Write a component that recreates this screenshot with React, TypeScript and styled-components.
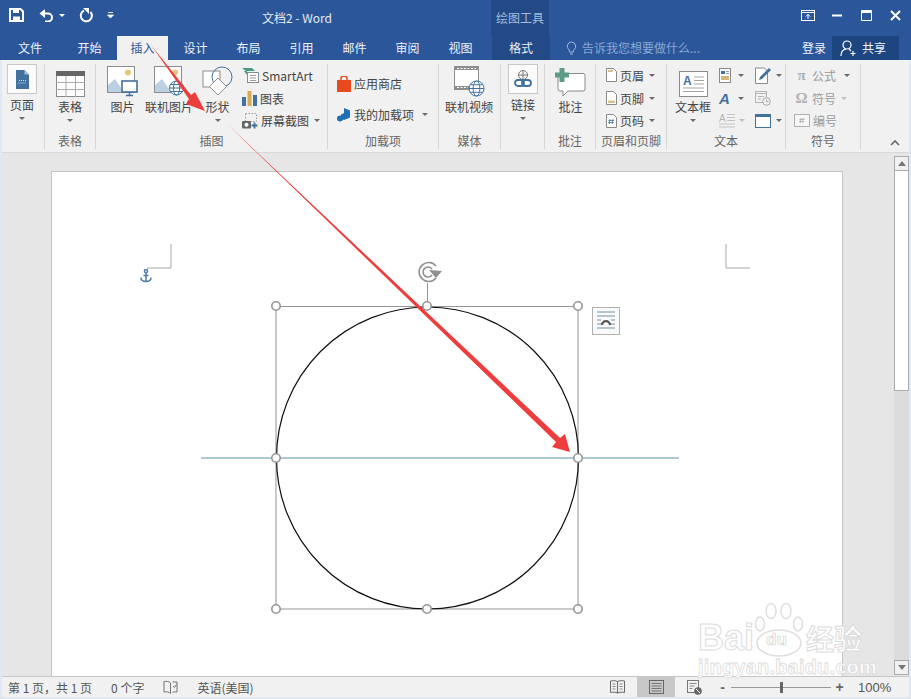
import React from 'react'
import styled, { createGlobalStyle } from 'styled-components'

const GlobalStyle = createGlobalStyle`
  html, body { margin: 0; padding: 0; background: #fff; }
  * { box-sizing: border-box; }
`

const BLUE = '#2b579a'
const ICON_BLUE = '#41719f'
const GREY = '#6a6a6a'

function SaveIcon() {
  return (
    <svg width="15" height="14" viewBox="0 0 15 14">
      <path d="M1 1h10.5L14 3.5V13H1z" fill="none" stroke="#fff" strokeWidth="2" />
      <path d="M4 1h6v4H4zM4 8.5h7V13H4z" fill="#fff" />
    </svg>
  )
}
function UndoIcon() {
  return (
    <svg width="15" height="13" viewBox="0 0 15 13">
      <path d="M2 4.5h7a4 4 0 0 1 0 8H6" fill="none" stroke="#fff" strokeWidth="2" />
      <path d="M6 0v9L0.5 4.5z" fill="#fff" />
    </svg>
  )
}
function RedoIcon() {
  return (
    <svg width="15" height="15" viewBox="0 0 15 15">
      <path d="M5 2.6A5.6 5.6 0 1 0 11.5 4" fill="none" stroke="#fff" strokeWidth="2" />
      <path d="M4 0l6 0v6z" fill="#fff" transform="translate(0 0)" />
    </svg>
  )
}
function QatMore() {
  return (
    <svg width="7" height="8" viewBox="0 0 7 8">
      <path d="M1 1.5h5M0.5 4l3 3 3-3z" fill="#fff" stroke="#fff" strokeWidth="0.8" />
    </svg>
  )
}
function RibbonDisplayIcon() {
  return (
    <svg width="14" height="11" viewBox="0 0 14 11">
      <rect x="0.5" y="0.5" width="13" height="10" fill="none" stroke="#fff" />
      <path d="M1 2.5h12" stroke="#fff" />
      <path d="M7 9V4.5M4.8 6.6L7 4.4l2.2 2.2" fill="none" stroke="#fff" />
    </svg>
  )
}
function MinIcon() {
  return (
    <svg width="10" height="3" viewBox="0 0 10 3">
      <rect width="10" height="2" y="0.5" fill="#fff" />
    </svg>
  )
}
function MaxIcon() {
  return (
    <svg width="11" height="11" viewBox="0 0 11 11">
      <path d="M0.5 0.5h10v10h-10z" fill="none" stroke="#fff" />
      <rect x="0.5" y="0.5" width="10" height="2.5" fill="#fff" />
    </svg>
  )
}
function CloseIcon() {
  return (
    <svg width="11" height="11" viewBox="0 0 11 11">
      <path d="M1 1l9 9M10 1l-9 9" stroke="#fff" strokeWidth="2" />
    </svg>
  )
}
function BulbIcon() {
  return (
    <svg width="11" height="15" viewBox="0 0 11 15">
      <path d="M5.5 1a4.3 4.3 0 0 1 2.4 7.8L7.4 11H3.6l-.5-2.2A4.3 4.3 0 0 1 5.5 1z" fill="none" stroke="#9db8dc" />
      <path d="M4 13h3" stroke="#9db8dc" />
    </svg>
  )
}
function ShareIcon() {
  return (
    <svg width="17" height="17" viewBox="0 0 17 17">
      <circle cx="7" cy="5" r="4" fill="none" stroke="#fff" strokeWidth="1.2" />
      <path d="M1 16c0-4 2-6.500 5-7M9 9l2 2" fill="none" stroke="#fff" strokeWidth="1.2" />
      <path d="M13 11v5M10.500 13.500h5" stroke="#fff" strokeWidth="1.2" />
    </svg>
  )
}
function PageIcon() {
  return (
    <svg width="13" height="19" viewBox="0 0 13 19">
      <path d="M0 0h8.500L13 4.500V19H0z" fill={ICON_BLUE} />
      <path d="M8.500 0v4.500H13z" fill="#a9c0da" />
      <path d="M3 10.500h7M2.500 13h8" stroke="#dfe8f2" strokeDasharray="1 1" />
    </svg>
  )
}
function TableIcon() {
  return (
    <svg width="29" height="26" viewBox="0 0 29 26">
      <rect x="0.5" y="0.5" width="28" height="25" fill="#fff" stroke="#8a8a8a" />
      <rect width="29" height="5" fill="#666" />
      <path d="M0 11.500h29M0 18.500h29M10 5v21M19.500 5v21" stroke="#aaa" />
    </svg>
  )
}
function PictureIcon() {
  return (
    <svg width="31" height="31" viewBox="0 0 31 31">
      <rect x="0.500" y="0.500" width="27" height="26" fill="#fff" stroke="#8d8d8d" />
      <circle cx="21" cy="6.500" r="3" fill="#e4c97a" />
      <path d="M1 26V19l7-6 9 13z" fill="#bcd0e3" />
      <rect x="15" y="15" width="15" height="11" fill="#fff" stroke="#41719f" strokeWidth="1.600" />
      <path d="M22.500 26v3M19 29.500h7" stroke="#41719f" strokeWidth="1.400" />
    </svg>
  )
}
function OnlinePictureIcon() {
  return (
    <svg width="31" height="31" viewBox="0 0 31 31">
      <rect x="0.500" y="0.500" width="27" height="26" fill="#fff" stroke="#8d8d8d" />
      <circle cx="21" cy="6.500" r="3" fill="#e4c97a" />
      <path d="M1 26V19l7-6 9 13z" fill="#bcd0e3" />
      <Globe cx={22.500} cy={22} r={7} />
    </svg>
  )
}
function Globe({ cx, cy, r }: { cx: number; cy: number; r: number }) {
  return (
    <g fill="#fff" stroke="#41719f" strokeWidth="1">
      <circle cx={cx} cy={cy} r={r} />
      <ellipse cx={cx} cy={cy} rx={r * 0.45} ry={r} fill="none" />
      <path d={`M${cx - r} ${cy}h${2 * r}M${cx - r * 0.85} ${cy - r * 0.5}h${1.7 * r}M${cx - r * 0.85} ${cy + r * 0.5}h${1.7 * r}`} fill="none" />
    </g>
  )
}
function ShapesIcon() {
  return (
    <svg width="31" height="31" viewBox="0 0 31 31">
      <rect x="1" y="5" width="17" height="16" fill="#fff" stroke="#8d8d8d" />
      <circle cx="20" cy="11" r="10" fill="none" stroke="#41719f" />
      <path d="M16 12l8.500 8.500-8.500 8.500-8.500-8.500z" fill="#fff" stroke="#8d8d8d" />
    </svg>
  )
}
function SmartArtIcon() {
  return (
    <svg width="17" height="16" viewBox="0 0 17 16">
      <path d="M0 1h10l3 3H4z" fill="#4a9a86" />
      <path d="M2 4l3 4V4z" fill="#4a9a86" />
      <rect x="5.500" y="5.500" width="11" height="10" fill="#fff" stroke="#8d8d8d" />
      <path d="M8 8.500h6M8 11h6M8 13.500h6" stroke="#9a9a9a" />
    </svg>
  )
}
function ChartIcon() {
  return (
    <svg width="15" height="15" viewBox="0 0 15 15">
      <rect x="0" y="6" width="4" height="9" fill="#41719f" />
      <rect x="5.500" y="0" width="4" height="15" fill="#d9a94f" />
      <rect x="11" y="4" width="4" height="11" fill="#41719f" />
    </svg>
  )
}
function ScreenshotIcon() {
  return (
    <svg width="16" height="16" viewBox="0 0 16 16">
      <rect x="3.500" y="0.500" width="11" height="8" fill="none" stroke="#999" strokeDasharray="1.500 1.500" />
      <rect x="0" y="8" width="9" height="7.500" rx="1" fill="#666" />
      <circle cx="4.500" cy="11.700" r="2" fill="#fff" />
      <path d="M12.500 9.500v6M9.500 12.500h6" stroke="#41719f" strokeWidth="1.800" />
    </svg>
  )
}
function StoreIcon() {
  return (
    <svg width="14" height="16" viewBox="0 0 14 16">
      <path d="M0 4h14v12H0z" fill="#e8491d" />
      <path d="M4 5V2.500a3 2.500 0 0 1 6 0V5" fill="none" stroke="#e8491d" strokeWidth="1.500" />
    </svg>
  )
}
function AddinIcon() {
  return (
    <svg width="14" height="14" viewBox="0 0 14 14">
      <path d="M7 0l6 2.500v7L7 12 4 10.800V6.500L7 5z" fill="#1f6fb5" />
      <circle cx="3" cy="10.500" r="3" fill="#1f6fb5" />
    </svg>
  )
}
function VideoIcon() {
  return (
    <svg width="31" height="31" viewBox="0 0 31 31">
      <rect x="0.500" y="0.500" width="24" height="23" fill="#fff" stroke="#8d8d8d" />
      <path d="M1 1h23v3H1zM1 20h23v3H1z" fill="#8d8d8d" />
      <path d="M3 2.500h19M3 21.500h11" stroke="#fff" strokeDasharray="2 1.500" />
      <Globe cx={22.500} cy={22.500} r={7.500} />
    </svg>
  )
}
function LinkIcon() {
  return (
    <svg width="18" height="18" viewBox="0 0 18 18">
      <circle cx="9" cy="5" r="4.500" fill="none" stroke="#777" />
      <path d="M4.500 5h9M9 .5v9" stroke="#777" />
      <rect x="1" y="10" width="9" height="6" rx="3" fill="none" stroke="#41719f" strokeWidth="1.800" />
      <rect x="8" y="10" width="9" height="6" rx="3" fill="none" stroke="#41719f" strokeWidth="1.800" />
    </svg>
  )
}
function CommentIcon() {
  return (
    <svg width="31" height="29" viewBox="0 0 31 29">
      <path d="M3 5.500h25a2 2 0 0 1 2 2V21a2 2 0 0 1-2 2H13l-5 5v-5H5a2 2 0 0 1-2-2z" fill="#fff" stroke="#8a8a8a" />
      <path d="M4.500 0h5v4.500H14v5H9.500V14h-5V9.500H0v-5h4.500z" fill="#5d9d88" />
    </svg>
  )
}
function HeaderIcon({ kind }: { kind: 'head' | 'foot' | 'num' }) {
  return (
    <svg width="11" height="14" viewBox="0 0 11 14">
      <path d="M0.500 0.500h7l3 3v10h-10z" fill="#fff" stroke="#8a8a8a" />
      {kind === 'head' && <rect x="2" y="2" width="5" height="2" fill="#d8c48e" />}
      {kind === 'foot' && <rect x="2" y="9.500" width="7" height="2.500" fill="#d8c48e" />}
      {kind === 'num' && <path d="M4 5l-.8 5M7 5l-.8 5M2.500 6.500h5.500M2.200 8.500h5.500" stroke="#41719f" strokeWidth="0.800" />}
    </svg>
  )
}
function TextBoxIcon() {
  return (
    <svg width="29" height="26" viewBox="0 0 29 26">
      <rect x="0.500" y="0.500" width="28" height="25" fill="#fff" stroke="#8a8a8a" />
      <text x="4" y="14" fontSize="12" fontWeight="700" fill={ICON_BLUE} fontFamily="'Liberation Sans', sans-serif">A</text>
      <path d="M15 6h10M15 9.500h10M15 13h10M4 17h21M4 20.500h21" stroke="#a5a5a5" />
    </svg>
  )
}
function QuickPartsIcon() {
  return (
    <svg width="12" height="15" viewBox="0 0 12 15">
      <rect x="0.500" y="0.500" width="11" height="14" fill="#fff" stroke="#8a8a8a" />
      <rect x="2" y="3" width="4" height="3" fill="#41719f" />
      <path d="M7 3.500h3M7 5.500h3" stroke="#999" />
      <rect x="2" y="8" width="8" height="4" fill="#d3b67a" />
    </svg>
  )
}
function SignatureIcon() {
  return (
    <svg width="17" height="17" viewBox="0 0 17 17">
      <path d="M0.500 1h9l3 3v12.500h-12z" fill="#fff" stroke="#8a8a8a" />
      <path d="M4 13l1-3 9-9 2 2-9 9z" fill="#41719f" />
    </svg>
  )
}
function DateIcon() {
  return (
    <svg width="16" height="16" viewBox="0 0 16 16">
      <rect x="0.500" y="1.500" width="11" height="11" fill="none" stroke="#b5b5b5" />
      <path d="M1 3.500h10M3 6.500h6M3 9h3" stroke="#b5b5b5" />
      <circle cx="11.500" cy="11.500" r="3.800" fill="#f1f1f1" stroke="#a5a5a5" />
      <path d="M11.500 9.500v2.200h2" fill="none" stroke="#a5a5a5" />
    </svg>
  )
}
function DropCapIcon() {
  return (
    <svg width="17" height="16" viewBox="0 0 17 16">
      <text x="0" y="9" fontSize="10" fill="#b5b5b5" fontFamily="'Liberation Sans', sans-serif">A</text>
      <path d="M8 1.500h8M8 4.500h8M8 7.500h8M0 11h16M0 14h16" stroke="#c4c4c4" />
    </svg>
  )
}
function ObjectIcon() {
  return (
    <svg width="16" height="14" viewBox="0 0 16 14">
      <rect x="0.500" y="0.500" width="15" height="13" fill="#fff" stroke="#41719f" />
      <rect width="16" height="3" fill="#41719f" />
    </svg>
  )
}
function SymbolBoxIcon() {
  return (
    <svg width="16" height="13" viewBox="0 0 16 13">
      <rect x="0.500" y="0.500" width="15" height="12" fill="#f6f6f6" stroke="#b0b0b0" />
      <path d="M7 4l-.8 5M9.500 4l-.8 5M5.500 5.500h5M5 7.500h5" stroke="#aaa" strokeWidth="0.800" />
    </svg>
  )
}
function ProofIcon() {
  return (
    <svg width="15" height="15" viewBox="0 0 15 15">
      <path d="M7.500 3C6 1.500 3.500 1 1 1.500v10.500c2.500-.5 5-.2 6.500 1.500V3z" fill="none" stroke="#777" />
      <path d="M9.500 2H14v10c-1.500-.2-3-.2-4.500.3M10 6l1.500 1.500 2-3" fill="none" stroke="#777" />
    </svg>
  )
}
function ReadIcon() {
  return (
    <svg width="15" height="14" viewBox="0 0 15 14">
      <path d="M7.500 1.500C5.500.5 3 .5 .5 1v11.500c2.500-.5 5-.5 7 .5 2-1 4.500-1 7-.5V1C12 .5 9.500.5 7.500 1.500zM7.500 1.500V13" fill="none" stroke="#666" />
      <path d="M2.500 4h3M2.500 6.500h3M2.500 9h3M9.500 4h3M9.500 6.500h3M9.500 9h3" stroke="#888" />
    </svg>
  )
}
function PrintIcon() {
  return (
    <svg width="15" height="14" viewBox="0 0 15 14">
      <rect x="0.500" y="0.500" width="14" height="13" fill="none" stroke="#666" />
      <path d="M2.500 3.500h10M2.500 6h10M2.500 8.500h10M2.500 11h10" stroke="#777" />
    </svg>
  )
}
function WebIcon() {
  return (
    <svg width="15" height="15" viewBox="0 0 15 15">
      <rect x="0.500" y="0.500" width="11" height="12" fill="none" stroke="#777" />
      <path d="M2.500 3.500h7M2.500 6h5M2.500 8.500h3" stroke="#888" />
      <circle cx="11" cy="11" r="3.800" fill="#666" />
      <path d="M9 9l4 4" stroke="#fff" />
    </svg>
  )
}

function DocumentDrawing() {
  const handles = [
    [275, 305], [426, 305], [577, 305],
    [275, 457], [577, 457],
    [275, 608], [426, 608], [577, 608],
  ]
  return (
    <DrawingSvg width="791" height="505" viewBox="51 171 791 505">
      <path d="M170 243v24h-24M725 243v24h24" fill="none" stroke="#a8a8a8" />
      <g fill="none" stroke="#4f7cab" strokeWidth="1.500">
        <circle cx="145" cy="270" r="1.600" />
        <path d="M145 272v8.500M140 276.500c0 2.500 2 4 5 4s5-1.500 5-4M142.500 274.500h5" />
      </g>
      <path d="M200 457h478" stroke="#5b94a8" />
      <rect x="275" y="305.500" width="302" height="302.500" fill="none" stroke="#949494" />
      <circle cx="426.500" cy="457" r="151" fill="none" stroke="#111" strokeWidth="1.200" />
      <path d="M426.500 305v-23" stroke="#949494" />
      <g fill="none" stroke="#909090" strokeWidth="1.600">
        <path d="M435 277a9.500 9.500 0 1 1 0-12" />
        <path d="M431 274a5 5 0 1 1 0-6" />
        <path d="M428 269l13 1-6 7z" fill="#909090" stroke="none" />
      </g>
      {handles.map(([x, y]) => (
        <circle key={`${x}-${y}`} cx={x} cy={y} r="4.200" fill="#fff" stroke="#959595" strokeWidth="1.600" />
      ))}
      <rect x="591.500" y="306.500" width="27" height="27" fill="#fafafa" stroke="#b0b0b0" />
      <path d="M596 311h18M596 315h18M596 327h18M596 323h5M609 323h5M596 319h4M610 319h4" stroke="#6f93a8" />
      <path d="M600 324a5 5 0 0 1 10 0h-2.200a2.800 2.800 0 0 0-5.600 0z" fill="#555" />
    </DrawingSvg>
  )
}

function PaperArrows() {
  return (
    <ArrowsSvg width="911" height="699" viewBox="0 0 911 699">
      <polygon points="151,45 191,95 195,92 205,111 186,104 189,99" fill="#ee3d3d" />
      <polygon points="226,123 560,438 565,434 570,452 552,447 556,442" fill="#ee3d3d" />
    </ArrowsSvg>
  )
}

function Watermark() {
  return (
    <MarkBox>
      <MarkRow>
        <MarkBig>Bai</MarkBig>
        <svg width="50" height="56" viewBox="0 0 50 56">
          <g fill="#fff" stroke="#dedede" strokeWidth="1.500">
            <ellipse cx="6" cy="22" rx="4.500" ry="7" />
            <ellipse cx="17" cy="9" rx="5" ry="7.500" />
            <ellipse cx="32" cy="9" rx="5" ry="7.500" />
            <ellipse cx="44" cy="22" rx="4.500" ry="7" />
            <ellipse cx="25" cy="41" rx="22" ry="13" />
          </g>
        </svg>
        <MarkDu>du</MarkDu>
        <MarkBig $cjk>经验</MarkBig>
      </MarkRow>
      <MarkUrl>jingyan.baidu.com</MarkUrl>
    </MarkBox>
  )
}

const tabs = ['开始', '插入', '设计', '布局', '引用', '邮件', '审阅', '视图']

export default function App() {
  return (
    <Root>
      <GlobalStyle />
      <TitleBar>
        <Qat>
          <QatSlot $w={15}><SaveIcon /></QatSlot>
          <QatSlot $w={15} $ml={15}><UndoIcon /></QatSlot>
          <WhiteCaret />
          <QatSlot $w={15} $ml={14}><RedoIcon /></QatSlot>
          <QatSlot $w={7} $ml={13}><QatMore /></QatSlot>
        </Qat>
        <DocTitle>文档2 - Word</DocTitle>
        <ContextTitle>绘图工具</ContextTitle>
        <WindowButtons>
          <WinSlot $w={14}><RibbonDisplayIcon /></WinSlot>
          <WinSlot $w={10} $ml={17}><MinIcon /></WinSlot>
          <WinSlot $w={11} $ml={19}><MaxIcon /></WinSlot>
          <WinSlot $w={11} $ml={18}><CloseIcon /></WinSlot>
        </WindowButtons>
      </TitleBar>
      <TabBar>
        <FileTab>文件</FileTab>
        {tabs.map(t => (
          <Tab key={t} $active={t === '插入'}>{t}</Tab>
        ))}
        <ContextTab>格式</ContextTab>
        <Search>
          <BulbIcon />
          <span>告诉我您想要做什么...</span>
        </Search>
        <Login>登录</Login>
        <Share>
          <ShareIcon />
          <span>共享</span>
        </Share>
      </TabBar>

      <Framed>
        <Ribbon>
          <Group $w={43}>
            <GroupBody $pl={5}>
              <Large $w={30}>
                <BoxedIcon><PageIcon /></BoxedIcon>
                <LargeLabel>页面</LargeLabel>
                <Caret />
              </Large>
            </GroupBody>
          </Group>

          <Group $w={51}>
            <GroupBody $pl={10}>
              <Large $w={30}>
                <IconSlot><TableIcon /></IconSlot>
                <LargeLabel>表格</LargeLabel>
                <Caret />
              </Large>
            </GroupBody>
            <GroupLabel>表格</GroupLabel>
          </Group>

          <Group $w={232}>
            <GroupBody $pl={11}>
              <Large $w={31}>
                <IconSlot><PictureIcon /></IconSlot>
                <LargeLabel>图片</LargeLabel>
              </Large>
              <Large $w={48} $ml={7}>
                <IconSlot><OnlinePictureIcon /></IconSlot>
                <LargeLabel>联机图片</LargeLabel>
              </Large>
              <Large $w={31} $ml={9}>
                <IconSlot><ShapesIcon /></IconSlot>
                <LargeLabel>形状</LargeLabel>
                <Caret />
              </Large>
              <SmallCol $ml={9}>
                <SmallRow><SmartArtIcon /><SmallText>SmartArt</SmallText></SmallRow>
                <SmallRow><ChartIcon /><SmallText>图表</SmallText></SmallRow>
                <SmallRow><ScreenshotIcon /><SmallText>屏幕截图</SmallText><InlineCaret /></SmallRow>
              </SmallCol>
            </GroupBody>
            <GroupLabel>插图</GroupLabel>
          </Group>

          <Group $w={111}>
            <GroupBody $pl={9}>
              <SmallCol $top={8} $gap={8}>
                <SmallRow><StoreIcon /><SmallText>应用商店</SmallText></SmallRow>
                <SmallRow><AddinIcon /><SmallText>我的加载项</SmallText><InlineCaret $ml={8} /></SmallRow>
              </SmallCol>
            </GroupBody>
            <GroupLabel>加载项</GroupLabel>
          </Group>

          <Group $w={62}>
            <GroupBody $pl={6}>
              <Large $w={48}>
                <IconSlot><VideoIcon /></IconSlot>
                <LargeLabel>联机视频</LargeLabel>
              </Large>
            </GroupBody>
            <GroupLabel>媒体</GroupLabel>
          </Group>

          <Group $w={44}>
            <GroupBody $pl={7}>
              <Large $w={30}>
                <BoxedIcon><LinkIcon /></BoxedIcon>
                <LargeLabel>链接</LargeLabel>
                <Caret />
              </Large>
            </GroupBody>
          </Group>

          <Group $w={51}>
            <GroupBody $pl={10}>
              <Large $w={31}>
                <IconSlot><CommentIcon /></IconSlot>
                <LargeLabel>批注</LargeLabel>
              </Large>
            </GroupBody>
            <GroupLabel>批注</GroupLabel>
          </Group>

          <Group $w={71}>
            <GroupBody $pl={10}>
              <SmallCol>
                <SmallRow><HeaderIcon kind="head" /><SmallText>页眉</SmallText><InlineCaret /></SmallRow>
                <SmallRow><HeaderIcon kind="foot" /><SmallText>页脚</SmallText><InlineCaret /></SmallRow>
                <SmallRow><HeaderIcon kind="num" /><SmallText>页码</SmallText><InlineCaret /></SmallRow>
              </SmallCol>
            </GroupBody>
            <GroupLabel>页眉和页脚</GroupLabel>
          </Group>

          <Group $w={119}>
            <GroupBody $pl={8}>
              <Large $w={36}>
                <IconSlot><TextBoxIcon /></IconSlot>
                <LargeLabel>文本框</LargeLabel>
                <Caret />
              </Large>
              <SmallCol $ml={8}>
                <SmallRow><QuickPartsIcon /><InlineCaret $ml={7} /></SmallRow>
                <SmallRow><LetterA>A</LetterA><InlineCaret $ml={7} /></SmallRow>
                <SmallRow><DropCapIcon /><InlineCaret $ml={3} $muted /></SmallRow>
              </SmallCol>
              <SmallCol $ml={10}>
                <SmallRow><SignatureIcon /><InlineCaret $ml={4} /></SmallRow>
                <SmallRow><DateIcon /></SmallRow>
                <SmallRow><ObjectIcon /><InlineCaret $ml={5} /></SmallRow>
              </SmallCol>
            </GroupBody>
            <GroupLabel>文本</GroupLabel>
          </Group>

          <Group $w={75}>
            <GroupBody $pl={8}>
              <SmallCol>
                <SmallRow><GreekGlyph>π</GreekGlyph><SmallText $muted>公式</SmallText><InlineCaret $ml={8} /></SmallRow>
                <SmallRow><GreekGlyph>Ω</GreekGlyph><SmallText $muted>符号</SmallText><InlineCaret $muted /></SmallRow>
                <SmallRow><SymbolBoxIcon /><SmallText $muted>编号</SmallText></SmallRow>
              </SmallCol>
            </GroupBody>
            <GroupLabel>符号</GroupLabel>
          </Group>

          <CollapseCell>
            <svg width="10" height="6" viewBox="0 0 10 6">
              <path d="M1 5l4-4 4 4" fill="none" stroke="#666" strokeWidth="1.600" />
            </svg>
          </CollapseCell>
        </Ribbon>

        <Workspace>
          <PageArea>
            <Page>
              <DocumentDrawing />
            </Page>
          </PageArea>
          <ScrollBar>
            <ScrollButton $up />
            <ScrollThumb />
            <ScrollTrack />
            <ScrollButton />
          </ScrollBar>
        </Workspace>

        <StatusBar>
          <StatusLeft>
            <StatusText>第 1 页，共 1 页</StatusText>
            <StatusText>0 个字</StatusText>
            <ProofIcon />
            <StatusText>英语(美国)</StatusText>
          </StatusLeft>
          <StatusRight>
            <ReadIcon />
            <ViewButton><PrintIcon /></ViewButton>
            <WebIcon />
            <ZoomSign $ml={16}>-</ZoomSign>
            <ZoomTrack><ZoomThumb /></ZoomTrack>
            <ZoomSign>+</ZoomSign>
            <ZoomValue>100%</ZoomValue>
          </StatusRight>
        </StatusBar>
      </Framed>

      <Watermark />
      <PaperArrows />
    </Root>
  )
}

const CJK = `"Noto Sans CJK SC", "Liberation Sans", sans-serif`

const Root = styled.div`
  position: relative;
  width: 911px;
  height: 699px;
  overflow: hidden;
  font-family: ${CJK};
  font-size: 12px;
  display: flex;
  flex-direction: column;
  background: ${BLUE};
`

const TitleBar = styled.div`
  height: 36px;
  display: flex;
  align-items: stretch;
  color: #fff;
`

const Qat = styled.div`
  width: 262px;
  padding-left: 9px;
  padding-bottom: 6px;
  display: flex;
  align-items: center;
`

const QatSlot = styled.div<{ $w: number; $ml?: number }>`
  width: ${p => p.$w}px;
  margin-left: ${p => p.$ml ?? 0}px;
  display: flex;
  align-items: center;
  justify-content: center;
`

const WhiteCaret = styled.span`
  width: 0;
  height: 0;
  margin-left: 5px;
  border-left: 3px solid transparent;
  border-right: 3px solid transparent;
  border-top: 3px solid #fff;
`

const DocTitle = styled.div`
  width: 229px;
  line-height: 36px;
  color: #e4eaf3;
`

const ContextTitle = styled.div`
  width: 58px;
  text-align: center;
  line-height: 36px;
  background: #234a86;
  color: #a5bcdc;
`

const WindowButtons = styled.div`
  margin-left: 252px;
  padding-bottom: 6px;
  display: flex;
  align-items: center;
`

const WinSlot = styled.div<{ $w: number; $ml?: number }>`
  width: ${p => p.$w}px;
  margin-left: ${p => p.$ml ?? 0}px;
  display: flex;
  align-items: center;
  justify-content: center;
`

const TabBar = styled.div`
  height: 24px;
  display: flex;
  align-items: stretch;
  color: #eef2f8;
  line-height: 24px;
`

const FileTab = styled.div`
  width: 60px;
  margin-right: 4px;
  text-align: center;
`

const Tab = styled.div<{ $active?: boolean }>`
  width: 51px;
  margin-right: 2px;
  text-align: center;
  background: ${p => (p.$active ? '#f1f1f1' : 'transparent')};
  color: ${p => (p.$active ? BLUE : 'inherit')};
`

const ContextTab = styled.div`
  width: 58px;
  margin-left: 4px;
  text-align: center;
  background: #234a86;
`

const Search = styled.div`
  width: 247px;
  padding-left: 16px;
  display: flex;
  align-items: center;
  gap: 5px;
  color: #89a8d4;
`

const Login = styled.div`
  width: 34px;
  margin-right: 0;
  text-align: center;
`

const Share = styled.div`
  width: 67px;
  margin-left: 1px;
  padding-left: 8px;
  display: flex;
  align-items: center;
  gap: 5px;
  background: #1d4681;
`

const Framed = styled.div`
  flex: 1;
  min-height: 0;
  display: flex;
  flex-direction: column;
  border-left: 2px solid #dde9f6;
  border-right: 2px solid #dde9f6;
  border-bottom: 2px solid #dde9f6;
`

const Ribbon = styled.div`
  height: 93px;
  padding: 4px 0 3px;
  display: flex;
  background: #f1f1f1;
  border-bottom: 1px solid #d9d9d9;
  color: #444;
`

const Group = styled.section<{ $w: number }>`
  width: ${p => p.$w}px;
  flex: none;
  display: flex;
  flex-direction: column;
  border-right: 1px solid #d6d6d6;
`

const GroupBody = styled.div<{ $pl: number }>`
  flex: 1;
  min-height: 0;
  display: flex;
  padding-left: ${p => p.$pl}px;
`

const GroupLabel = styled.div`
  height: 17px;
  line-height: 17px;
  text-align: center;
  color: #666;
  white-space: nowrap;
`

const Large = styled.div<{ $w: number; $ml?: number }>`
  width: ${p => p.$w}px;
  margin-left: ${p => p.$ml ?? 0}px;
  display: flex;
  flex-direction: column;
  align-items: center;
`

const IconSlot = styled.div`
  height: 35px;
  padding-bottom: 2px;
  display: flex;
  align-items: flex-end;
  justify-content: center;
`

const BoxedIcon = styled.div`
  width: 30px;
  height: 30px;
  margin-bottom: 3px;
  display: flex;
  align-items: center;
  justify-content: center;
  background: #fbfbfb;
  border: 1px solid #c8c8c8;
`

const LargeLabel = styled.div`
  height: 16px;
  line-height: 16px;
  white-space: nowrap;
`

const Caret = styled.span`
  width: 0;
  height: 0;
  margin-top: 4px;
  border-left: 3px solid transparent;
  border-right: 3px solid transparent;
  border-top: 3px solid ${GREY};
`

const InlineCaret = styled.span<{ $ml?: number; $muted?: boolean }>`
  width: 0;
  height: 0;
  margin-left: ${p => p.$ml ?? 5}px;
  border-left: 3px solid transparent;
  border-right: 3px solid transparent;
  border-top: 3px solid ${p => (p.$muted ? '#c0c0c0' : GREY)};
`

const SmallCol = styled.div<{ $ml?: number; $top?: number; $gap?: number }>`
  margin-left: ${p => p.$ml ?? 0}px;
  padding-top: ${p => p.$top ?? 0}px;
  display: flex;
  flex-direction: column;
  gap: ${p => p.$gap ?? 0}px;
`

const SmallRow = styled.div`
  height: 23px;
  display: flex;
  align-items: center;
  white-space: nowrap;
`

const SmallText = styled.span<{ $muted?: boolean }>`
  margin-left: 3px;
  color: ${p => (p.$muted ? '#9a9a9a' : '#444')};
`

const LetterA = styled.span`
  width: 12px;
  font: italic 700 15px "Liberation Sans", sans-serif;
  color: ${ICON_BLUE};
`

const GreekGlyph = styled.span`
  width: 15px;
  text-align: center;
  font: 700 15px "Liberation Serif", serif;
  color: #b0b0b0;
`

const CollapseCell = styled.div`
  flex: 1;
  display: flex;
  align-items: flex-end;
  justify-content: flex-end;
  padding: 0 9px 3px 0;
`

const Workspace = styled.div`
  flex: 1;
  min-height: 0;
  display: flex;
  background: #e6e6e6;
`

const PageArea = styled.div`
  flex: 1;
  min-width: 0;
  padding: 18px 0 0 49px;
  overflow: hidden;
`

const Page = styled.div`
  position: relative;
  width: 792px;
  height: 506px;
  background: #fff;
  border: 1px solid #c4c4c4;
  border-bottom: none;
`

const DrawingSvg = styled.svg`
  position: absolute;
  left: -0.5px;
  top: -0.5px;
  display: block;
`

const ScrollBar = styled.div`
  width: 15px;
  margin: 3px 0 1px;
  display: flex;
  flex-direction: column;
`

const ScrollButton = styled.div<{ $up?: boolean }>`
  height: 15px;
  flex: none;
  position: relative;
  background: #f1f1f1;
  border: 1px solid #ababab;
  &::after {
    content: '';
    position: absolute;
    left: 3px;
    top: 4px;
    border-left: 4px solid transparent;
    border-right: 4px solid transparent;
    ${p => (p.$up ? 'border-bottom: 5px solid #777;' : 'border-top: 5px solid #777;')}
  }
`

const ScrollThumb = styled.div`
  height: 220px;
  flex: none;
  background: #fff;
  border: 1px solid #ababab;
  border-top: none;
`

const ScrollTrack = styled.div`
  flex: 1;
  background: #dcdcdc;
`

const StatusBar = styled.div`
  height: 21px;
  flex: none;
  display: flex;
  justify-content: space-between;
  align-items: center;
  background: #f1f1f1;
  border-top: 1px solid #c6c6c6;
  color: #555;
`

const StatusLeft = styled.div`
  padding-left: 6px;
  display: flex;
  align-items: center;
  gap: 19px;
`

const StatusText = styled.span`
  white-space: nowrap;
`

const StatusRight = styled.div`
  padding-right: 19px;
  height: 100%;
  display: flex;
  align-items: center;
`

const ViewButton = styled.div`
  width: 38px;
  height: 100%;
  margin: 0 12px;
  display: flex;
  align-items: center;
  justify-content: center;
  background: #c8c8c8;
`

const ZoomSign = styled.span<{ $ml?: number }>`
  width: 9px;
  margin-left: ${p => p.$ml ?? 0}px;
  text-align: center;
  font: 700 14px "Liberation Sans", sans-serif;
  color: #666;
`

const ZoomTrack = styled.div`
  position: relative;
  width: 100px;
  height: 1px;
  margin: 0 4px;
  background: #999;
`

const ZoomThumb = styled.div`
  position: absolute;
  left: 49px;
  top: -5px;
  width: 3px;
  height: 11px;
  background: #666;
`

const ZoomValue = styled.span`
  width: 32px;
  margin-left: 14px;
  font-family: "Liberation Sans", sans-serif;
  font-size: 13px;
`

const ArrowsSvg = styled.svg`
  position: absolute;
  left: 0;
  top: 0;
  pointer-events: none;
`

const MarkBox = styled.div`
  position: absolute;
  left: 698px;
  top: 600px;
  width: 170px;
  pointer-events: none;
`

const MarkRow = styled.div`
  position: relative;
  height: 58px;
  display: flex;
  align-items: flex-end;
`

const MarkBig = styled.span<{ $cjk?: boolean }>`
  font: 700 ${p => (p.$cjk ? 28 : 36)}px ${p => (p.$cjk ? CJK : '"Liberation Sans", sans-serif')};
  line-height: 40px;
  color: #fff;
  -webkit-text-stroke: 1px #dcdcdc;
  margin-left: ${p => (p.$cjk ? 2 : 0)}px;
`

const MarkDu = styled.span`
  position: absolute;
  left: 68px;
  bottom: 8px;
  font: 700 17px "Liberation Sans", sans-serif;
  color: #fff;
  -webkit-text-stroke: 0.7px #d4d4d4;
`

const MarkUrl = styled.div`
  margin-top: -2px;
  font: 700 20px "Liberation Sans", sans-serif;
  letter-spacing: 0.2px;
  color: #fff;
  -webkit-text-stroke: 0.8px #dcdcdc;
  white-space: nowrap;
`
